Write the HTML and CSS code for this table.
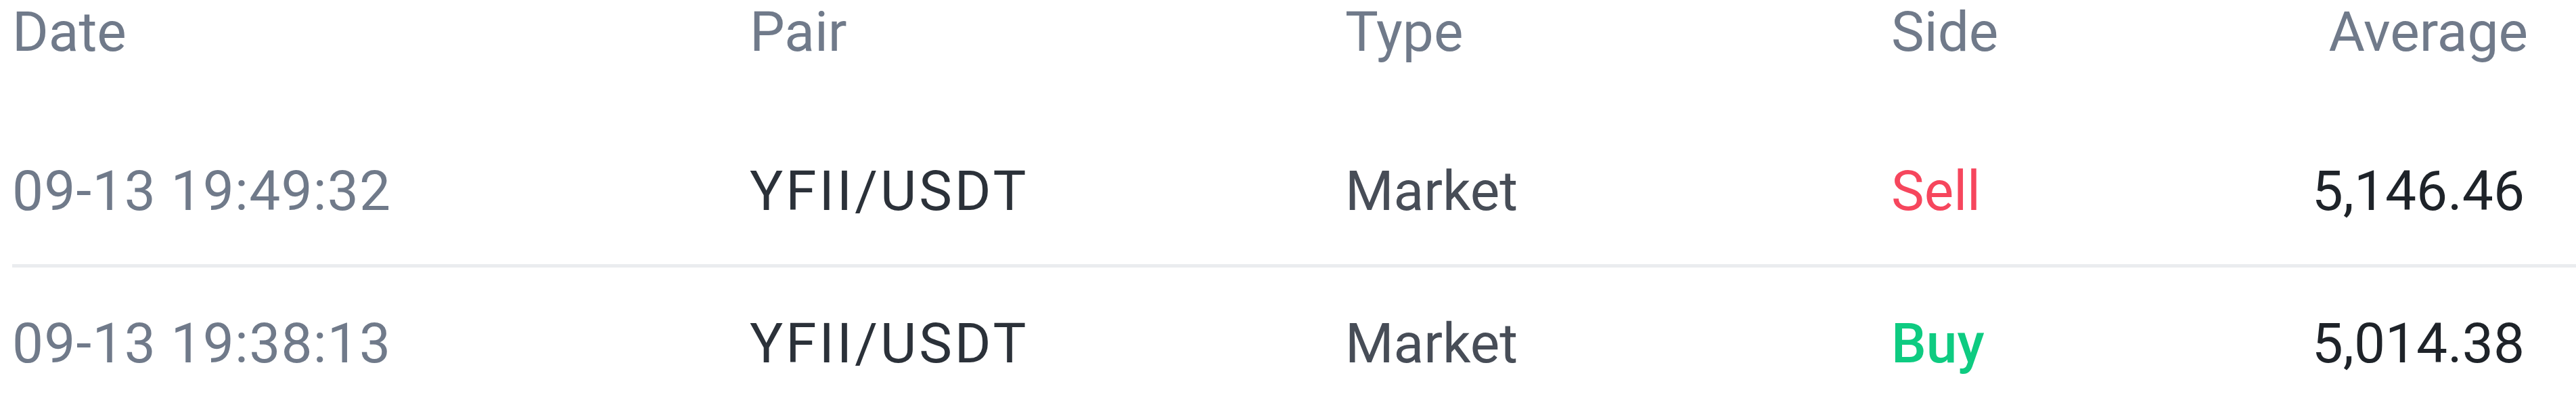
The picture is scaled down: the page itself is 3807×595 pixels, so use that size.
FILE: index.html
```html
<!DOCTYPE html>
<html lang="en">
<head>
  <meta charset="UTF-8">
  <title>Order History</title>
  <link rel="stylesheet" href="styles.css">
</head>
<body>
  <div class="orders">
    <div class="row head">
      <span>Date</span>
      <span>Pair</span>
      <span>Type</span>
      <span>Side</span>
      <span class="num">Average</span>
    </div>
    <div class="row item">
      <span class="date">09-13 19:49:32</span>
      <span class="pair">YFII/USDT</span>
      <span class="type">Market</span>
      <span class="sell">Sell</span>
      <span class="num">5,146.46</span>
    </div>
    <div class="row item">
      <span class="date">09-13 19:38:13</span>
      <span class="pair">YFII/USDT</span>
      <span class="type">Market</span>
      <span class="buy">Buy</span>
      <span class="num">5,014.38</span>
    </div>
  </div>
</body>
</html>
```

FILE: styles.css
```css
body { margin:0; background:#fff; font-family:Roboto, 'Noto Sans', Arial, sans-serif; font-size:82px; }
.orders { margin-left:18px; }
.row { display:grid; grid-template-columns:1090px 880px 807px 1fr auto; padding-right:71px; }
.head { height:173px; line-height:95px; color:#707a8a; align-items:start; }
.item { height:217px; align-items:center; color:#1e2329; }
.item + .item { height:224px; }
.item:not(:last-child) { border-bottom:5px solid #eaecef; }
.item .num { padding-right:5px; }
.date { color:#707a8a; letter-spacing:1.2px; }
.pair { color:#2b3139; letter-spacing:4px; }
.type { color:#474d57; }
.sell { color:#f6465d; }
.buy { color:#0ecb81; font-weight:500; }
.num { text-align:right; }
```
